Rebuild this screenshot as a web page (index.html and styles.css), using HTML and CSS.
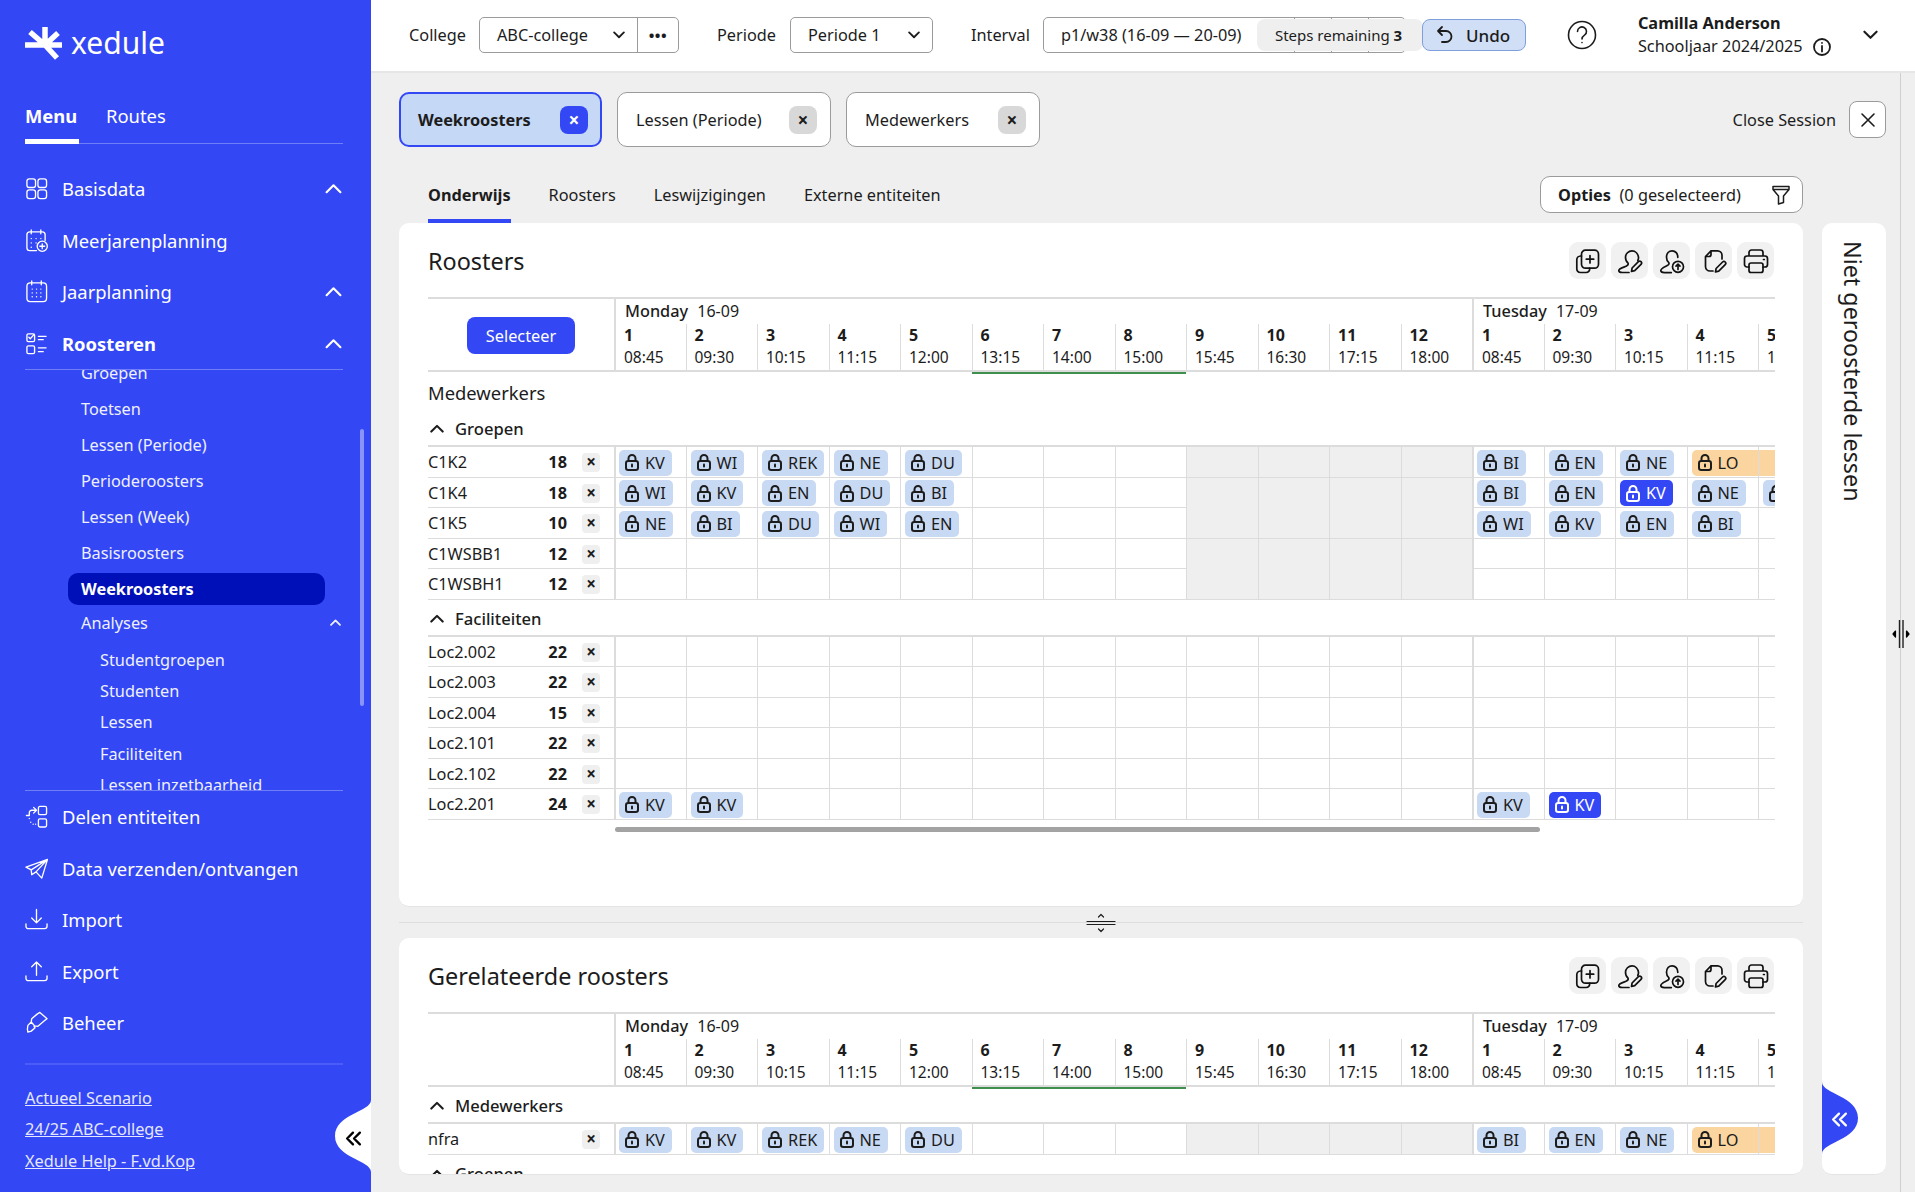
FILE: index.html
```html
<!DOCTYPE html>
<html lang="en">
<head>
    <meta charset="UTF-8">
    <title>Xedule - Weekroosters</title>
    <link rel="stylesheet" href="styles.css">
</head>
<body>
    <svg class="sprite" aria-hidden="true">
        <symbol id="i-lock" viewBox="0 0 14 17">
            <path d="M3.5 7V4.500a3.500 3.500 0 0 1 7 0V7" />
            <rect x="1" y="7" width="12" height="9" rx="2.200" />
            <path d="M7 10.500v2" />
        </symbol>
        <symbol id="i-up" viewBox="0 0 16 10">
            <path d="M1.500 8.500 8 2l6.500 6.500" />
        </symbol>
        <symbol id="i-add" viewBox="0 0 26 26">
            <rect x="6.500" y="2.200" width="17" height="18" rx="4" />
            <path d="M15 7.500v7.500M11.300 11.200h7.400M6.500 8H5.500A3.800 3.800 0 0 0 1.800 11.800v9a3.800 3.800 0 0 0 3.700 3.700h5.500a3.800 3.800 0 0 0 3.700-3.700v-.6" />
        </symbol>
        <symbol id="i-user-edit" viewBox="0 0 26 26">
            <path d="M20.800 12.500c.5-1 .8-2 .7-3.200C21 5.800 18.500 2.800 15 2.800S8.500 5.800 8.500 9.300c0 2.700 1 4.700 2.500 5.700.6 1.300-.2 2.300-1.500 3-2.500 1.300-7.700 2.500-7.700 4.500 0 2 1.500 2 3.500 2H12" />
            <path d="m14.500 23.500.6-3.500 6.300-6.300a1.800 1.800 0 0 1 2.600 2.600L17.700 22.600z" />
        </symbol>
        <symbol id="i-user-up" viewBox="0 0 26 26">
            <path d="M18.800 9.300C18.800 5.500 16.500 2.800 13.200 2.800S7.500 5.500 7.500 9.300c0 2.500 1 4.300 2.300 5.300.6 1.300-.2 2.300-1.500 3-2.500 1.300-6.500 2.800-6.500 5 0 2 1.500 2 3.500 2h7" />
            <circle cx="19" cy="18.800" r="5.500" />
            <path d="M19 21.500V16.300M17 18.200l2-2 2 2" />
        </symbol>
        <symbol id="i-doc-edit" viewBox="0 0 26 26">
            <path d="M10 2.800h6.500A4.500 4.500 0 0 1 21 7.300V11M10 2.800 4.500 8.500V18.500A4.500 4.500 0 0 0 9 23h3M10 2.800V6.500a2 2 0 0 1-2 2H4.500" />
            <path d="m14.500 24 .6-3.500 6.500-6.500a1.800 1.800 0 0 1 2.600 2.600L17.700 23.100z" />
        </symbol>
        <symbol id="i-print" viewBox="0 0 26 26">
            <path d="M6 8V4.500A2.500 2.500 0 0 1 8.500 2h9A2.500 2.500 0 0 1 20 4.500V8M6 19H4a2.500 2.500 0 0 1-2.500-2.500v-6A2.500 2.500 0 0 1 4 8h18a2.500 2.500 0 0 1 2.500 2.500v6A2.500 2.500 0 0 1 22 19h-2" />
            <rect x="6" y="15" width="14" height="9.500" rx="2" />
            <path d="M20.500 11.500h.8" />
        </symbol>
        <symbol id="i-handle" viewBox="0 0 36 72">
            <path d="M36 0C36 12 0 14 0 36s36 24 36 36z" />
        </symbol>
        <symbol id="i-double" viewBox="0 0 16 14">
            <path d="M7.500 1.500 2 7l5.500 5.500M14 1.500 8.500 7l5.500 5.500" />
        </symbol>
    </svg>

    <div class="app">
        <aside class="sidebar">
            <div class="logo">
                <svg class="logo-mark" viewBox="0 0 38 34"><path d="M0 19h37M20 19 5 6M20 19V1M20 19 33 7M20 19 32 32" /></svg>
                <span class="logo-text">xedule</span>
            </div>

            <div class="side-tabs">
                <span class="side-tab active">Menu</span>
                <span class="side-tab">Routes</span>
            </div>

            <nav class="nav">
                <a class="nav-item">
                    <svg class="nav-icon" viewBox="0 0 24 24"><rect x="2" y="2" width="9" height="9" rx="2.500" /><rect x="13.500" y="2" width="9" height="9" rx="2.500" /><rect x="2" y="13.500" width="9" height="9" rx="2.500" /><rect x="13.500" y="13.500" width="9" height="9" rx="2.500" /></svg>
                    Basisdata
                    <svg class="nav-chev"><use href="#i-up" /></svg>
                </a>
                <a class="nav-item">
                    <svg class="nav-icon" viewBox="0 0 24 24"><path d="M12 22.500H5a3 3 0 0 1-3-3V6a3 3 0 0 1 3-3h13a3 3 0 0 1 3 3v6M6.500 1v4M16.500 1v4M6.500 10h.1M11.500 10h.1M16.500 10h.1M6.500 14.500h.1M6.500 19h.1M11.500 14.500h.1" /><circle cx="18" cy="18" r="5.300" /><path d="M18 15.500v5M15.500 18h5" /></svg>
                    Meerjarenplanning
                </a>
                <a class="nav-item">
                    <svg class="nav-icon" viewBox="0 0 24 24"><rect x="2" y="3" width="20.500" height="19.500" rx="3.500" /><path d="M7 1v4M17 1v4M7.500 9.500h.1M12 9.500h.1M16.500 9.500h.1M7.500 13.500h.1M12 13.500h.1M16.500 13.500h.1M7.500 17.500h.1M12 17.500h.1M16.500 17.500h.1" /></svg>
                    Jaarplanning
                    <svg class="nav-chev"><use href="#i-up" /></svg>
                </a>
                <a class="nav-item current">
                    <svg class="nav-icon" viewBox="0 0 24 24"><rect x="2" y="2" width="8" height="8" rx="1.500" /><path d="m4 5.500 1.500 1.500L9.500 2.500M14 4.500h8M14 8h5" /><rect x="2" y="14.500" width="8" height="8" rx="1.500" /><path d="M14 16.500h8M14 20.500h5" /></svg>
                    Roosteren
                    <svg class="nav-chev"><use href="#i-up" /></svg>
                </a>
            </nav>

            <div class="subnav">
                <ul class="subnav-list">
                    <li>Groepen</li>
                    <li>Toetsen</li>
                    <li>Lessen (Periode)</li>
                    <li>Perioderoosters</li>
                    <li>Lessen (Week)</li>
                    <li>Basisroosters</li>
                    <li class="active">Weekroosters</li>
                    <li class="has-sub">Analyses <svg class="sub-chev"><use href="#i-up" /></svg></li>
                    <li class="deep">Studentgroepen</li>
                    <li class="deep">Studenten</li>
                    <li class="deep">Lessen</li>
                    <li class="deep">Faciliteiten</li>
                    <li class="deep">Lessen inzetbaarheid</li>
                </ul>
                <span class="subnav-thumb"></span>
            </div>

            <nav class="nav nav-bottom">
                <a class="nav-item">
                    <svg class="nav-icon" viewBox="0 0 24 24"><rect x="14" y="1.500" width="8.500" height="8.500" rx="1.500" /><rect x="14" y="14.500" width="8.500" height="8.500" rx="1.500" /><path d="M11 5.500H7a2.500 2.500 0 0 0-2.500 2.500v3H1.500M9 2.500l3 3-3 3M4.500 14v.1M6 18v.1M8.500 20h.1M11 20h.1" /></svg>
                    Delen entiteiten
                </a>
                <a class="nav-item">
                    <svg class="nav-icon" viewBox="0 0 24 24"><path d="M1 10.500 23.500 2.500 17.500 22 11.500 15.500 7 18.500 6.500 13.500zM6.500 13.500 23.500 2.500 11.500 15.500" /></svg>
                    Data verzenden/ontvangen
                </a>
                <a class="nav-item">
                    <svg class="nav-icon" viewBox="0 0 24 24"><path d="M12 1.500v14M7 10.500l5 5 5-5M1 16.500V19a2.500 2.500 0 0 0 2.500 2.500h17A2.500 2.500 0 0 0 23 19v-2.500" /></svg>
                    Import
                </a>
                <a class="nav-item">
                    <svg class="nav-icon" viewBox="0 0 24 24"><path d="M12 16V2M7 7l5-5 5 5M1 16.500V19a2.500 2.500 0 0 0 2.500 2.500h17A2.500 2.500 0 0 0 23 19v-2.500" /></svg>
                    Export
                </a>
                <a class="nav-item">
                    <svg class="nav-icon" viewBox="0 0 24 24"><path d="m15.500 1.500 7.500 6.500-2.500 2-7 6-3.500-.5-3.500-4 .5-3.500 6-5zM6.500 11.500 3 15l-.5 4 .5 3 3.500-1 4-3.500-1-1.500" /></svg>
                    Beheer
                </a>
            </nav>

            <div class="side-links">
                <a>Actueel Scenario</a>
                <a>24/25 ABC-college</a>
                <a>Xedule Help - F.vd.Kop</a>
            </div>

            <div class="side-collapse">
                <svg class="handle-shape"><use href="#i-handle" /></svg>
                <svg class="handle-arrows"><use href="#i-double" /></svg>
            </div>
        </aside>

        <div class="main">
            <header class="topbar">
                <span class="top-label">College</span>
                <div class="select college">
                    <span class="select-value">ABC-college</span>
                    <svg class="select-chev"><use href="#i-up" /></svg>
                    <span class="select-more">•••</span>
                </div>
                <span class="top-label periode-label">Periode</span>
                <div class="select periode">
                    <span class="select-value">Periode 1</span>
                    <svg class="select-chev"><use href="#i-up" /></svg>
                </div>
                <span class="top-label interval-label">Interval</span>
                <div class="interval">
                    <span class="interval-value">p1/w38 (16-09 — 20-09)</span>
                    <span class="tick"></span><span class="tick"></span><span class="tick"></span>
                </div>
                <div class="steps">Steps remaining <b>3</b></div>
                <button class="undo">
                    <svg class="undo-icon" viewBox="0 0 20 20"><path d="M7 2 3 6l4 4M3 6h8a5.500 5.500 0 0 1 0 11H7" /></svg>
                    Undo
                </button>
                <svg class="help" viewBox="0 0 30 30"><circle cx="15" cy="15" r="13.500" /><path d="M10.500 11.500a4.500 4.500 0 1 1 7 3.700c-1.500 1-2.500 1.800-2.500 3.800M15 22.500v.1" /></svg>
                <div class="user">
                    <b>Camilla Anderson</b>
                    <span class="user-sub">Schooljaar 2024/2025
                        <svg class="info" viewBox="0 0 18 18"><circle cx="9" cy="9" r="8" /><path d="M9 8v5.500M9 4.800v.1" /></svg>
                    </span>
                </div>
                <svg class="user-chev"><use href="#i-up" /></svg>
            </header>

            <div class="workspace">
                <div class="content">
                    <div class="session-bar">
                        <div class="chip-tab active">Weekroosters <span class="chip-x">×</span></div>
                        <div class="chip-tab lessen">Lessen (Periode) <span class="chip-x">×</span></div>
                        <div class="chip-tab mede">Medewerkers <span class="chip-x">×</span></div>
                        <span class="close-label">Close Session</span>
                        <button class="close-btn">
                            <svg viewBox="0 0 16 16"><path d="m2 2 12 12M14 2 2 14" /></svg>
                        </button>
                    </div>

                    <div class="columns">
                        <div class="panels">
                            <div class="sub-tabs">
                                <span class="sub-tab active">Onderwijs</span>
                                <span class="sub-tab">Roosters</span>
                                <span class="sub-tab">Leswijzigingen</span>
                                <span class="sub-tab">Externe entiteiten</span>
                                <button class="options"><b>Opties</b>&nbsp; (0 geselecteerd)
                                    <svg viewBox="0 0 20 20"><path d="M2 1.500h16v3L12.500 11v6.500l-5 1.500v-8L2 4.500zM2.500 4.500h15" /></svg>
                                </button>
                            </div>

                            <section class="card first">
                                <div class="card-head">
                                    <h2>Roosters</h2>
                                    <div class="card-tools" data-tools></div>
                                </div>
                                <div class="sheet" id="sheet-main"></div>
                                <div class="sheet-scroll"><span></span></div>
                            </section>

                            <div class="splitter">
                                <svg viewBox="0 0 30 20"><path d="M1 8.500h28M1 11.500h28M12.500 4 15 1.500 17.500 4M12.500 16l2.500 2.500 2.500-2.500" /></svg>
                            </div>

                            <section class="card second">
                                <div class="card-head">
                                    <h2>Gerelateerde roosters</h2>
                                    <div class="card-tools" data-tools></div>
                                </div>
                                <div class="sheet" id="sheet-related"></div>
                            </section>
                        </div>

                        <aside class="side-panel">
                            <span class="side-panel-title">Niet geroosterde lessen</span>
                            <div class="side-expand">
                                <svg class="handle-shape"><use href="#i-handle" /></svg>
                                <svg class="handle-arrows"><use href="#i-double" /></svg>
                            </div>
                        </aside>
                    </div>
                </div>

                <div class="edge">
                    <svg class="edge-grip" viewBox="0 0 18 28"><path class="grip-lines" d="M7.500 0v28M11 0v28" /><path class="grip-arrows" d="M3.500 11 1 14l2.500 3zM14.500 11l2.500 3-2.500 3z" /></svg>
                </div>
            </div>
        </div>
    </div>

    <script src="script.js"></script>
</body>
</html>
```

FILE: styles.css
```css
:root {
    --blue: #3347f5;
    --blue-dark: #0010b8;
    --chip: #c8d9f3;
    --orange: #fad59f;
    --bg: #efefef;
    --line: #dcdcdc;
    --text: #1c1c1c;
    --border: #9b9b9b;
}

* {
    box-sizing: border-box;
}

body {
    margin: 0;
    height: 1192px;
    overflow: hidden;
    font-family: "Noto Sans", sans-serif;
    font-size: 16.3px;
    color: var(--text);
    background-color: var(--bg);
}

.sprite {
    display: none;
}

svg {
    fill: none;
    stroke: currentColor;
    stroke-width: 1.6;
    stroke-linecap: round;
    stroke-linejoin: round;
    display: block;
    flex: none;
}

.app {
    display: flex;
    height: 100%;
}

/* Sidebar */
.sidebar {
    position: relative;
    width: 371px;
    flex: none;
    height: 100%;
    padding: 25px 28px 0 25px;
    background-color: var(--blue);
    color: white;
    display: flex;
    flex-direction: column;
}

.logo {
    display: flex;
    align-items: center;
    height: 35px;
    gap: 8px;
}

.logo-mark {
    width: 38px;
    height: 34px;
    stroke-width: 5.5;
    stroke-linecap: butt;
}

.logo-text {
    font-size: 30px;
    line-height: 35px;
}

.side-tabs {
    display: flex;
    gap: 27px;
    height: 84px;
    padding-top: 35px;
    border-bottom: 1px solid rgba(255, 255, 255, 0.3);
    font-size: 18.4px;
}

.side-tab {
    line-height: 42px;
    height: 48px;
}

.side-tab.active {
    font-weight: 700;
    border-bottom: 5px solid white;
    height: 49px;
    width: 54px;
}

.nav {
    margin-top: 19px;
}

.nav-item {
    display: flex;
    align-items: center;
    height: 51.5px;
    font-size: 18.4px;
    gap: 14px;
}

.nav-bottom {
    margin-top: 0;
    padding-bottom: 14px;
    border-bottom: 2px solid rgba(255, 255, 255, 0.12);
}

.nav-item.current {
    font-weight: 700;
}

.nav-icon {
    width: 23px;
    height: 23px;
    stroke-width: 1.4;
}

.nav-chev {
    width: 17px;
    height: 11px;
    margin-left: auto;
    stroke-width: 2;
    margin-right: 1px;
}

.subnav {
    position: relative;
    height: 422px;
    border-top: 1px solid rgba(255, 255, 255, 0.3);
    border-bottom: 1px solid rgba(255, 255, 255, 0.3);
}

.subnav-list {
    list-style: none;
    height: 100%;
    overflow: hidden;
    margin: 0;
    padding: 0 18px 0 43px;
    color: #eef0ff;
}

.subnav-list li {
    display: flex;
    align-items: center;
    height: 36px;
    padding-left: 13px;
}

.subnav-list li:first-child {
    margin-top: -15px;
}

.subnav-list .active {
    height: 32px;
    margin: 2px 0;
    border-radius: 10px;
    background-color: var(--blue-dark);
    font-weight: 700;
    color: white;
}

.subnav-list .has-sub {
    height: 33px;
    margin: -1px -16px 5px 0;
    justify-content: space-between;
}

.subnav-list .deep {
    height: 31.4px;
    padding-left: 32px;
}

.sub-chev {
    width: 11px;
    height: 7px;
    stroke-width: 2.6;
}

.subnav-thumb {
    position: absolute;
    right: -21px;
    top: 59px;
    width: 4px;
    height: 277px;
    border-radius: 2px;
    background-color: rgba(255, 255, 255, 0.42);
}

.side-links {
    display: flex;
    flex-direction: column;
    padding-top: 18px;
    color: #e4e7ff;
}

.side-links a {
    height: 31.5px;
    line-height: 31.5px;
    text-decoration: underline;
}

.side-collapse {
    position: absolute;
    right: 0;
    top: 1100px;
    width: 36px;
    height: 72px;
    color: black;
}

.handle-shape {
    width: 36px;
    height: 72px;
    fill: white;
    stroke: none;
}

.handle-arrows {
    position: absolute;
    left: 10px;
    top: 31px;
    width: 17px;
    height: 15px;
    stroke-width: 2.2;
}

/* Top bar */
.main {
    flex: 1;
    min-width: 0;
    display: flex;
    flex-direction: column;
}

.topbar {
    display: flex;
    align-items: center;
    height: 73px;
    padding: 0 0 1px 38px;
    background-color: white;
    border-bottom: 2px solid #e6e6e6;
    flex: none;
}

.top-label {
    margin-right: 13px;
}

.periode-label {
    margin-left: 38px;
    margin-right: 14px;
}

.interval-label {
    margin-left: 38px;
}

.select {
    display: flex;
    align-items: center;
    height: 36px;
    border: 1px solid var(--border);
    border-radius: 5px;
    padding-left: 17px;
}

.college {
    width: 200px;
}

.periode {
    width: 143px;
}

.select-value {
    flex: 1;
}

.select-chev {
    width: 12px;
    height: 8px;
    transform: rotate(180deg);
    stroke-width: 2.4;
    margin-right: 12px;
}

.select-more {
    width: 41px;
    height: 34px;
    line-height: 34px;
    border-left: 1px solid var(--border);
    text-align: center;
    font-size: 15px;
    font-weight: 700;
    letter-spacing: 0.5px;
}

.interval {
    display: flex;
    align-items: stretch;
    width: 363px;
    height: 36px;
    border: 1px solid var(--border);
    border-radius: 5px;
    padding-left: 17px;
}

.interval-value {
    line-height: 34px;
    width: 234px;
    white-space: nowrap;
}

.tick {
    width: 37px;
    border-left: 1px solid var(--border);
}

.steps {
    margin-left: -149px;
    width: 166px;
    height: 32px;
    line-height: 32px;
    padding-left: 18px;
    border-radius: 8px;
    background-color: var(--bg);
    font-size: 15px;
    position: relative;
    white-space: nowrap;
}

.undo {
    position: relative;
    display: flex;
    align-items: center;
    gap: 11px;
    width: 104px;
    height: 32px;
    margin-left: -1px;
    padding-left: 12px;
    border: 1px solid #7f9fdc;
    border-radius: 8px;
    background-color: #d0dff5;
    color: var(--text);
    font: 500 17px "Noto Sans", sans-serif;
}

.undo-icon {
    width: 20px;
    height: 20px;
    stroke-width: 1.8;
}

.help {
    width: 30px;
    height: 30px;
    margin-left: 41px;
}

.user {
    display: flex;
    flex-direction: column;
    margin-left: 41px;
    line-height: 23px;
}

.user-sub {
    display: flex;
    align-items: center;
    gap: 10px;
}

.info {
    width: 18px;
    height: 18px;
    stroke-width: 1.8;
}

.user-chev {
    width: 15px;
    height: 10px;
    margin-left: 32px;
    transform: rotate(180deg);
    stroke-width: 2.2;
}

/* Workspace */
.workspace {
    flex: 1;
    min-height: 0;
    display: flex;
}

.content {
    flex: 1;
    min-width: 0;
    padding: 0 14px 0 28px;
    border-right: 1px solid #cfcfcf;
    display: flex;
    flex-direction: column;
}

.edge {
    position: relative;
    width: 14px;
    flex: none;
}

.edge-grip {
    position: absolute;
    left: -9px;
    top: 547px;
    width: 18px;
    height: 28px;
}

.grip-lines {
    stroke: #222;
    stroke-width: 1.4;
    stroke-linecap: butt;
}

.grip-arrows {
    fill: black;
    stroke: black;
    stroke-width: 1.2;
}

.session-bar {
    display: flex;
    align-items: center;
    height: 55px;
    margin-top: 19px;
    flex: none;
}

.chip-tab {
    display: flex;
    align-items: center;
    justify-content: space-between;
    height: 55px;
    margin-right: 15px;
    padding: 0 13px 0 18px;
    border: 1px solid var(--border);
    border-radius: 10px;
    background-color: white;
    width: 214px;
}

.chip-tab.mede {
    width: 194px;
}

.chip-tab.active {
    width: 203px;
    border: 2px solid var(--blue);
    background-color: #c5d8f6;
    font-weight: 700;
    padding: 0 12px 0 17px;
}

.chip-x {
    display: flex;
    align-items: center;
    justify-content: center;
    width: 28px;
    height: 28px;
    border-radius: 8px;
    background-color: #d8d8d8;
    font-weight: 700;
    font-size: 19px;
}

.chip-tab.active .chip-x {
    background-color: var(--blue);
    color: white;
}

.close-label {
    margin-left: auto;
    margin-right: 13px;
}

.close-btn {
    width: 37px;
    height: 37px;
    padding: 0;
    display: flex;
    align-items: center;
    justify-content: center;
    border: 1px solid var(--border);
    border-radius: 8px;
    background-color: white;
    color: var(--text);
}

.close-btn svg {
    width: 16px;
    height: 16px;
    stroke-width: 1.6;
}

.columns {
    flex: 1;
    min-height: 0;
    display: flex;
    gap: 19px;
}

.panels {
    width: 1404px;
    flex: none;
    display: flex;
    flex-direction: column;
}

.sub-tabs {
    display: flex;
    align-items: flex-start;
    gap: 38px;
    height: 76px;
    padding: 29px 0 0 29px;
    flex: none;
}

.sub-tab {
    line-height: 38px;
    height: 47px;
}

.sub-tab.active {
    font-weight: 700;
    border-bottom: 4px solid var(--blue);
}

.options {
    display: flex;
    align-items: center;
    margin-left: auto;
    width: 263px;
    height: 37px;
    padding: 0 11px 0 17px;
    border: 1px solid var(--border);
    border-radius: 10px;
    background-color: white;
    color: var(--text);
    font: 16.3px "Noto Sans", sans-serif;
}

.options svg {
    width: 20px;
    height: 20px;
    margin-left: auto;
    stroke-width: 1.5;
}

.card {
    background-color: white;
    border-radius: 10px;
    padding: 19px 28px 0 29px;
    border-bottom: 1px solid #e4e4e4;
}

.card.first {
    height: 684px;
    flex: none;
}

.card.second {
    height: 237px;
    flex: none;
    overflow: hidden;
}

.card-head {
    display: flex;
    justify-content: space-between;
    align-items: center;
    height: 38px;
    margin-bottom: 17px;
}

h2 {
    margin: 0;
    font-size: 23.4px;
    font-weight: 400;
}

.card-tools {
    display: flex;
    gap: 5px;
    margin: -1px 1px 0 0;
}

.tool {
    display: flex;
    align-items: center;
    justify-content: center;
    width: 37px;
    height: 37px;
    border-radius: 9px;
    background-color: #f1f1f1;
    color: #111;
}

.tool svg {
    width: 26px;
    height: 26px;
    stroke-width: 1.7;
}

.splitter {
    height: 31px;
    flex: none;
    display: flex;
    align-items: center;
    justify-content: center;
    background: linear-gradient(#dedede, #dedede) 0 15px / 100% 1px no-repeat;
}

.splitter svg {
    width: 30px;
    height: 20px;
    margin-left: -1px;
    stroke-width: 1.2;
}

/* Timetable */
.sheet {
    overflow: hidden;
    width: 1347px;
}

.row {
    display: grid;
    grid-template-columns: 186px repeat(17, 71.5px);
    width: max-content;
}

.sheet-head {
    height: 75px;
    border-top: 2px solid var(--line);
    border-bottom: 2px solid var(--line);
    grid-template-rows: 25px 48px;
}

.head-left {
    grid-row: 1 / 3;
    grid-column: 1;
    display: flex;
    align-items: center;
    justify-content: center;
}

.select-btn {
    width: 108px;
    height: 37px;
    border: none;
    border-radius: 8px;
    background-color: var(--blue);
    color: white;
    font: 16.3px "Noto Sans", sans-serif;
}

.day {
    grid-row: 1;
    border-left: 2px solid var(--line);
    padding: 1px 0 0 9px;
    line-height: 22px;
    font-size: 16px;
    white-space: nowrap;
}

.day b {
    font-weight: 500;
    font-size: 16.3px;
    margin-right: 5px;
}

.slot {
    grid-row: 2;
    position: relative;
    padding: 1px 0 0 8px;
    border-left: 1px solid var(--line);
    line-height: 22px;
    font-size: 15.500px;
    white-space: nowrap;
}

.slot b {
    display: block;
    line-height: 21px;
    font-size: 16px;
}

.slot.first-slot {
    border-left: 2px solid var(--line);
}

.slot.now::after {
    content: "";
    position: absolute;
    left: -1px;
    right: 0;
    bottom: -2px;
    height: 2px;
    background-color: #3f8f4f;
}

.sheet-label {
    font-size: 18.4px;
    line-height: 42px;
    height: 38px;
}

.group {
    display: flex;
    align-items: center;
    gap: 11px;
    height: 37px;
    padding-top: 2px;
    font-size: 16.6px;
    font-weight: 500;
    border-bottom: 2px solid var(--line);
}

.group svg {
    width: 14px;
    height: 9px;
    margin-left: 2px;
    stroke-width: 2.4;
}

.data-row {
    height: 30.500px;
    border-bottom: 1px solid var(--line);
}

.data-name {
    display: flex;
    align-items: center;
    padding: 1px 14px 0 0;
    line-height: 29px;
}

.data-name span:first-child {
    flex: 1;
}

.data-count {
    font-weight: 700;
}

.data-x {
    width: 18px;
    height: 19px;
    margin-left: 15px;
    border-radius: 4px;
    background-color: var(--bg);
    text-align: center;
    line-height: 18px;
    font-weight: 700;
    font-size: 17px;
}

.cell {
    display: flex;
    align-items: center;
    padding: 1px 0 0 4px;
    border-left: 1px solid var(--line);
    min-width: 0;
}

.cell.first-slot {
    border-left: 2px solid var(--line);
    padding-left: 3px;
}

.cell.off {
    background-color: var(--bg);
}

.lesson {
    display: flex;
    align-items: center;
    gap: 6px;
    height: 26px;
    padding: 0 7px 0 6px;
    border-radius: 5px;
    background-color: var(--chip);
    white-space: nowrap;
    flex: none;
}

.lesson svg {
    width: 14px;
    height: 17px;
    stroke-width: 2;
}

.lesson.picked {
    background-color: var(--blue);
    color: white;
}

.lesson.wide {
    width: 120px;
    background-color: var(--orange);
}

.sheet-scroll {
    padding: 7px 0 0 187px;
}

.sheet-scroll span {
    display: block;
    width: 925px;
    height: 5px;
    border-radius: 3px;
    background-color: #a3a3a3;
}

/* Right panel */
.side-panel {
    position: relative;
    width: 64px;
    height: 952px;
    margin-top: 76px;
    padding: 18px 3px 0 0;
    border-radius: 10px;
    background-color: white;
    border-bottom: 1px solid #e4e4e4;
    display: flex;
    justify-content: center;
}

.side-panel-title {
    writing-mode: vertical-rl;
    font-size: 23.3px;
    line-height: 32px;
    height: 262px;
    white-space: nowrap;
}

.side-expand {
    position: absolute;
    left: 0;
    bottom: 20px;
    width: 36px;
    height: 72px;
    color: white;
}

.side-expand .handle-shape {
    fill: var(--blue);
    transform: scaleX(-1);
}

.side-expand .handle-arrows {
    left: 9px;
    top: 30px;
}
```

FILE: script.js
```js
// Column layout of the timetable: 12 slots on Monday and the first 5 of Tuesday
const mondayTimes = ['08:45', '09:30', '10:15', '11:15', '12:00', '13:15', '14:00', '15:00', '15:45', '16:30', '17:15', '18:00'];
const tuesdayTimes = mondayTimes.slice(0, 5);
const SLOTS = mondayTimes.length + tuesdayTimes.length;
const LOCK = '<svg><use href="#i-lock" /></svg>';

const mainGroups = [
    {
        name: 'Groepen', off: true, rows: [
            ['C1K2', 18, { 0: 'KV', 1: 'WI', 2: 'REK', 3: 'NE', 4: 'DU', 12: 'BI', 13: 'EN', 14: 'NE', 15: 'LO*' }],
            ['C1K4', 18, { 0: 'WI', 1: 'KV', 2: 'EN', 3: 'DU', 4: 'BI', 12: 'BI', 13: 'EN', 14: 'KV!', 15: 'NE', 16: 'BI' }],
            ['C1K5', 10, { 0: 'NE', 1: 'BI', 2: 'DU', 3: 'WI', 4: 'EN', 12: 'WI', 13: 'KV', 14: 'EN', 15: 'BI' }],
            ['C1WSBB1', 12, {}],
            ['C1WSBH1', 12, {}]
        ]
    },
    {
        name: 'Faciliteiten', rows: [
            ['Loc2.002', 22, {}],
            ['Loc2.003', 22, {}],
            ['Loc2.004', 15, {}],
            ['Loc2.101', 22, {}],
            ['Loc2.102', 22, {}],
            ['Loc2.201', 24, { 0: 'KV', 1: 'KV', 12: 'KV', 13: 'KV!' }]
        ]
    }
];

const relatedGroups = [
    {
        name: 'Medewerkers', off: true, rows: [
            ['nfra', '', { 0: 'KV', 1: 'KV', 2: 'REK', 3: 'NE', 4: 'DU', 12: 'BI', 13: 'EN', 14: 'NE', 15: 'LO*' }]
        ]
    },
    { name: 'Groepen', rows: [] }
];

function lessonHtml(code) {
    if (!code) return '';
    let cls = 'lesson';
    if (code.endsWith('!')) cls += ' picked';
    if (code.endsWith('*')) cls += ' wide';
    return `<span class="${cls}">${LOCK}${code.replace(/[!*]/, '')}</span>`;
}

function headHtml(withSelect) {
    const left = withSelect ? '<button class="select-btn">Selecteer</button>' : '';
    let html = `<div class="row sheet-head"><div class="head-left">${left}</div>`;
    html += '<div class="day" style="grid-column: 2 / span 12"><b>Monday</b> 16-09</div>';
    html += '<div class="day" style="grid-column: 14 / span 5"><b>Tuesday</b> 17-09</div>';
    mondayTimes.concat(tuesdayTimes).forEach((time, i) => {
        const number = i < 12 ? i + 1 : i - 11;
        let cls = 'slot';
        if (i === 0 || i === 12) cls += ' first-slot';
        if (i >= 5 && i <= 7) cls += ' now';
        html += `<div class="${cls}" style="grid-column: ${i + 2}"><b>${number}</b>${time}</div>`;
    });
    return html + '</div>';
}

function rowHtml(row, off) {
    const [name, count, lessons] = row;
    let html = '<div class="row data-row"><div class="data-name">';
    html += `<span>${name}</span><span class="data-count">${count}</span><span class="data-x">×</span></div>`;
    for (let i = 0; i < SLOTS; i++) {
        let cls = 'cell';
        if (i === 0 || i === 12) cls += ' first-slot';
        if (off && i >= 8 && i <= 11) cls += ' off';
        html += `<div class="${cls}">${lessonHtml(lessons[i])}</div>`;
    }
    return html + '</div>';
}

function buildSheet(id, groups, opts) {
    let html = headHtml(opts.select);
    if (opts.label) html += `<div class="sheet-label">${opts.label}</div>`;
    groups.forEach(group => {
        html += `<div class="group"><svg><use href="#i-up" /></svg>${group.name}</div>`;
        group.rows.forEach(row => { html += rowHtml(row, group.off); });
    });
    document.getElementById(id).innerHTML = html;
}

buildSheet('sheet-main', mainGroups, { select: true, label: 'Medewerkers' });
buildSheet('sheet-related', relatedGroups, { select: false });

// Same five tools on both cards
document.querySelectorAll('[data-tools]').forEach(box => {
    box.innerHTML = ['add', 'user-edit', 'user-up', 'doc-edit', 'print']
        .map(name => `<span class="tool"><svg><use href="#i-${name}" /></svg></span>`)
        .join('');
});
```
